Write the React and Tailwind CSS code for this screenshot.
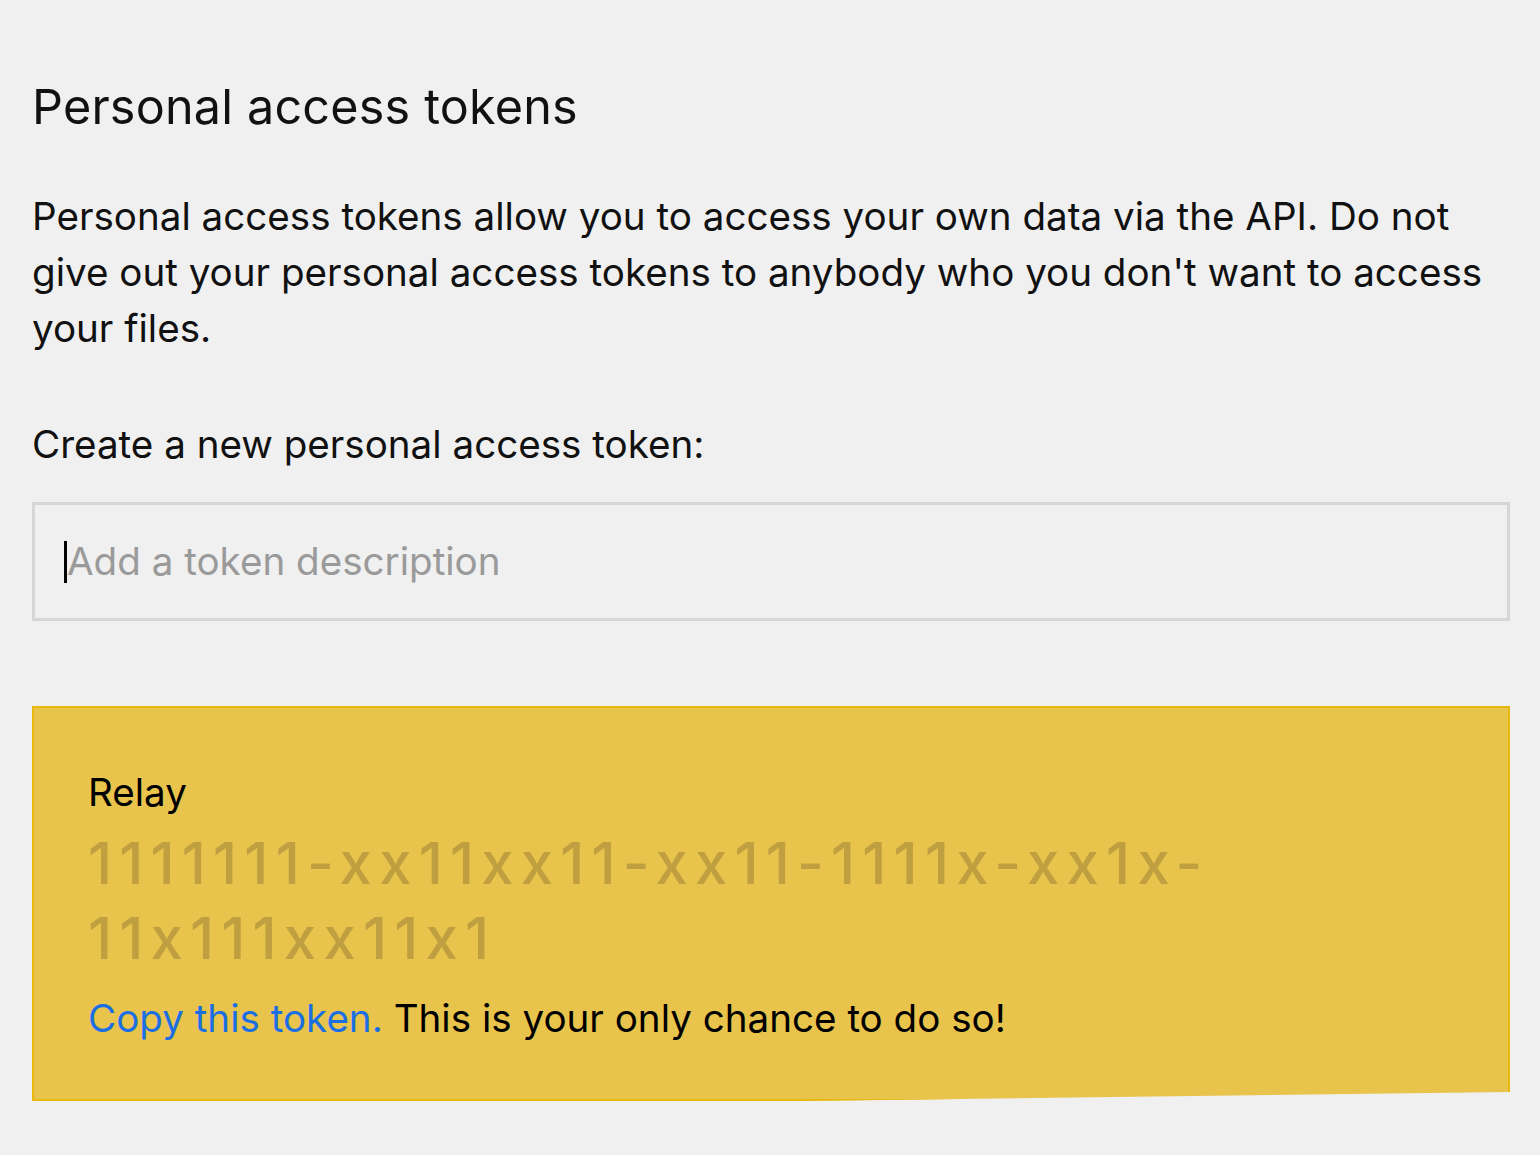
export default function App() {
  return (
    <div className="min-h-screen bg-[#f0f0f0] pl-8 pr-[30px] pt-[75px] font-['Inter','Liberation_Sans',sans-serif] text-[#111]">
      <h1 className="text-[48.5px] font-normal leading-[64px] tracking-[0.2px]">Personal access tokens</h1>

      <p className="mt-[49px] text-[38.6px] leading-[56px]">
        Personal access tokens allow you to access your own data via the API. Do not give out your personal access
        tokens to anybody who you don't want to access your files.
      </p>

      <p className="mt-[60px] text-[38.6px] leading-[56px]">Create a new personal access token:</p>

      <div className="mt-[30px] flex h-[119px] items-center border-[3px] border-[#d6d6d6] px-[29px]">
        <span className="h-[42px] w-[3px] bg-black" />
        <span className="text-[38.6px] text-[#9a9a9a]">Add a token description</span>
      </div>

      <div className="mt-[85px] border-2 border-[#e7b90f] bg-[#e8c44c] px-[54px] pt-[62px] pb-[59px] [clip-path:polygon(0_0,100%_0,100%_calc(100%-9px),52%_100%,0_100%)]">
        <div className="text-[38.6px] leading-[44px] text-black">Relay</div>
        <div className="mt-[12px] text-[58px] font-medium leading-[75px] tracking-[7.2px] text-[#bf9f40]">
          1111111-xx11xx11-xx11-1111x-xx1x-11x111xx11x1
        </div>
        <p className="mt-[20px] text-[38.6px] leading-[44px] text-black">
          <span className="text-[#1b6fe3]">Copy this token.</span> This is your only chance to do so!
        </p>
      </div>
    </div>
  );
}
